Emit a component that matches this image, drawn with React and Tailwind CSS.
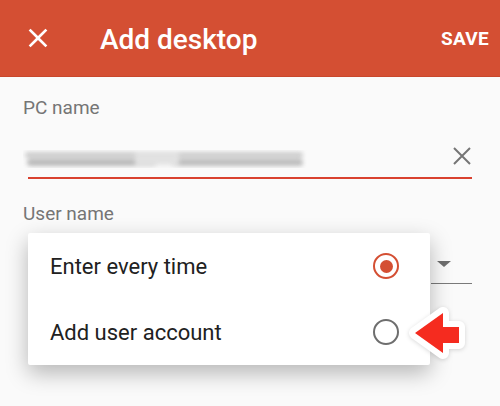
import React from 'react';

const font = { fontFamily: 'Roboto, "Liberation Sans", sans-serif' };

// Material "close" glyph
function CloseIcon({ className }) {
  return (
    <svg viewBox="0 0 24 24" className={className} fill="currentColor">
      <path d="M19 6.41 17.59 5 12 10.59 6.41 5 5 6.41 10.59 12 5 17.59 6.41 19 12 13.41 17.59 19 19 17.59 13.41 12z" />
    </svg>
  );
}

// thin clear-field cross
function ClearIcon({ className }) {
  return (
    <svg viewBox="0 0 18 18" className={className} fill="none" stroke="currentColor" strokeWidth="2">
      <path d="M1 1 17 17M17 1 1 17" />
    </svg>
  );
}

function Radio({ checked }) {
  return (
    <span
      className={`flex h-[26px] w-[26px] items-center justify-center rounded-full border-[2.5px] ${
        checked ? 'border-[#d44f33]' : 'border-[#6e6e6e]'
      }`}
    >
      {checked && <span className="h-[13px] w-[13px] rounded-full bg-[#d44f33]" />}
    </span>
  );
}

// blurred hostname placeholder
function BlurredValue() {
  return (
    <div className="relative h-[18px] w-[284px] overflow-hidden">
      <div className="absolute inset-0 blur-[2px]">
        <div className="absolute left-[2px] top-[2px] h-[6px] w-[278px] rounded-full bg-[#cdcdcd]" />
        <div className="absolute left-[4px] top-[9px] h-[7px] w-[130px] rounded-full bg-[#bababa]" />
        <div className="absolute left-[148px] top-[9px] h-[7px] w-[132px] rounded-full bg-[#bdbdbd]" />
        <div className="absolute left-[112px] top-[3px] h-[12px] w-[44px] bg-[#e2e2e2]" />
      </div>
    </div>
  );
}

function MenuItem({ label, checked }) {
  return (
    <div className="flex h-[66px] items-center justify-between pl-[22px] pr-[31px]">
      <span className="text-[22px] text-[#212121]">{label}</span>
      <Radio checked={checked} />
    </div>
  );
}

export default function App() {
  return (
    <div className="relative h-[406px] w-[500px] overflow-hidden bg-[#fafafa]" style={font}>
      {/* app bar */}
      <header className="flex h-[77px] items-center border-b border-[#c8472c] bg-[#d44f33] text-white">
        <CloseIcon className="ml-[22px] h-[32px] w-[32px]" />
        <h1 className="ml-[46px] mt-[3px] text-[28px] font-medium leading-none">Add desktop</h1>
        <span className="ml-auto mr-[11px] text-[19px] font-bold leading-none tracking-[0.3px]">SAVE</span>
      </header>

      {/* form */}
      <div className="px-[23px] pt-[20px]">
        <div className="text-[19px] leading-[22px] text-[#757575]">PC name</div>
        <div className="mt-[31px] flex items-start justify-between">
          <BlurredValue />
          <ClearIcon className="-mt-[3px] mr-[6px] h-[18px] w-[18px] text-[#757575]" />
        </div>
        <div className="mx-[5px] mt-[9px] h-[2px] bg-[#d9412f]" />

        <div className="mt-[24px] text-[19px] leading-[22px] text-[#757575]">User name</div>
        <div className="mt-[36px] flex justify-end pr-[5px]">
          <div className="flex w-[41px] flex-col">
            <svg viewBox="0 0 14 6" className="ml-[6px] h-[6px] w-[14px]">
              <path d="M0 0h14L7 6z" fill="#6e6e6e" />
            </svg>
            <div className="mt-[16px] h-px bg-[#7a7a7a]" />
          </div>
        </div>
      </div>

      {/* account picker popup */}
      <div className="absolute left-[28px] top-[233px] w-[402px] rounded-[2px] bg-white shadow-[0_8px_22px_rgba(0,0,0,0.28)]">
        <MenuItem label="Enter every time" checked />
        <MenuItem label="Add user account" />
      </div>

      {/* pointer arrow */}
      <svg viewBox="0 0 64 64" className="absolute left-[404px] top-[301px] h-[64px] w-[64px] drop-shadow-[0_1px_2px_rgba(0,0,0,0.15)]">
        <path
          d="M11 32 L39 12 L39 26 L55 26 L55 42 L39 42 L39 52 Z"
          fill="#f52b1f"
          stroke="#ffffff"
          strokeWidth="12"
          strokeLinejoin="round"
          paintOrder="stroke"
        />
      </svg>
    </div>
  );
}
